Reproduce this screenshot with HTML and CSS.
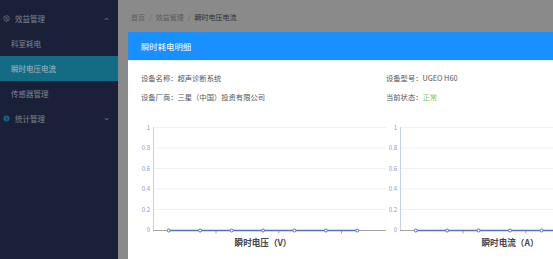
FILE: index.html
```html
<!DOCTYPE html>
<html lang="zh">
<head>
    <meta charset="utf-8">
    <title>瞬时电压电流</title>
    <link rel="stylesheet" href="styles.css">
</head>
<body>
    <div class="layout">
        <aside class="sidebar">
            <div class="menu-group">
                <svg class="menu-icon" viewBox="0 0 8 8"><circle cx="4" cy="4" r="3.2" fill="none" stroke="currentColor" stroke-width="0.8"/><path d="M5 2.6H3.4L3.2 4h1.2a0.9 0.9 0 0 1 0 1.8H3" fill="none" stroke="currentColor" stroke-width="0.7"/></svg>
                <span>效益管理</span>
                <svg class="arrow" viewBox="0 0 6 4"><path d="M1 3L3 1L5 3" fill="none" stroke="currentColor" stroke-width="0.9"/></svg>
            </div>
            <div class="menu-item">科室耗电</div>
            <div class="menu-item active">瞬时电压电流</div>
            <div class="menu-item">传感器管理</div>
            <div class="menu-group">
                <svg class="menu-icon blue" viewBox="0 0 8 8"><circle cx="4" cy="4" r="3.4" fill="currentColor"/><path d="M5 2.6H3.4L3.2 4h1.2a0.9 0.9 0 0 1 0 1.8H3" fill="none" stroke="#1b2039" stroke-width="0.7"/></svg>
                <span>统计管理</span>
                <svg class="arrow" viewBox="0 0 6 4"><path d="M1 1L3 3L5 1" fill="none" stroke="currentColor" stroke-width="0.9"/></svg>
            </div>
        </aside>

        <main class="main">
            <div class="breadcrumb">
                <span>首页</span>
                <span class="sep">/</span>
                <span>效益管理</span>
                <span class="sep">/</span>
                <span class="current">瞬时电压电流</span>
            </div>

            <div class="dialog">
                <div class="dialog-header">瞬时耗电明细</div>
                <div class="dialog-body">
                    <div class="column">
                        <p class="info">设备名称：超声诊断系统</p>
                        <p class="info">设备厂商：三星（中国）投资有限公司</p>
                        <svg class="chart" width="245" height="140" viewBox="0 0 245 140">
                            <g stroke="#edf1f8" stroke-width="1">
                                <line x1="12" y1="15.5" x2="245" y2="15.5"/>
                                <line x1="12" y1="36" x2="245" y2="36"/>
                                <line x1="12" y1="56.5" x2="245" y2="56.5"/>
                                <line x1="12" y1="77" x2="245" y2="77"/>
                                <line x1="12" y1="97.5" x2="245" y2="97.5"/>
                            </g>
                            <line x1="12.5" y1="15" x2="12.5" y2="118" stroke="#c8d0ee" stroke-width="1"/>
                            <g class="ylabels" text-anchor="end">
                                <text x="9" y="17.5">1</text>
                                <text x="9" y="38">0.8</text>
                                <text x="9" y="58.5">0.6</text>
                                <text x="9" y="79">0.4</text>
                                <text x="9" y="99.5">0.2</text>
                                <text x="9" y="120">0</text>
                            </g>
                            <line x1="12" y1="118.5" x2="245" y2="118.5" stroke="#a3a3a3" stroke-width="1"/>
                            <g stroke="#a3a3a3" stroke-width="1">
                                <line x1="75" y1="118" x2="75" y2="121.5"/>
                                <line x1="137.8" y1="118" x2="137.8" y2="121.5"/>
                                <line x1="200.6" y1="118" x2="200.6" y2="121.5"/>
                            </g>
                            <line x1="27.7" y1="118.5" x2="216.3" y2="118.5" stroke="#5470c6" stroke-width="1.3"/>
                            <g fill="#fff" stroke="#5470c6" stroke-width="1">
                                <circle cx="27.7" cy="118.5" r="1.5"/>
                                <circle cx="59.1" cy="118.5" r="1.5"/>
                                <circle cx="90.6" cy="118.5" r="1.5"/>
                                <circle cx="122" cy="118.5" r="1.5"/>
                                <circle cx="153.4" cy="118.5" r="1.5"/>
                                <circle cx="184.9" cy="118.5" r="1.5"/>
                                <circle cx="216.3" cy="118.5" r="1.5"/>
                            </g>
                            <text class="axis-title" x="122" y="133.5" text-anchor="middle">瞬时电压（V）</text>
                        </svg>
                    </div>
                    <div class="column">
                        <p class="info">设备型号：UGEO H60</p>
                        <p class="info">当前状态：<span class="ok">正常</span></p>
                        <svg class="chart shifted" width="245" height="140" viewBox="0 0 245 140">
                            <g stroke="#edf1f8" stroke-width="1">
                                <line x1="12" y1="15.5" x2="245" y2="15.5"/>
                                <line x1="12" y1="36" x2="245" y2="36"/>
                                <line x1="12" y1="56.5" x2="245" y2="56.5"/>
                                <line x1="12" y1="77" x2="245" y2="77"/>
                                <line x1="12" y1="97.5" x2="245" y2="97.5"/>
                            </g>
                            <line x1="12.5" y1="15" x2="12.5" y2="118" stroke="#c8d0ee" stroke-width="1"/>
                            <g class="ylabels" text-anchor="end">
                                <text x="9" y="17.5">1</text>
                                <text x="9" y="38">0.8</text>
                                <text x="9" y="58.5">0.6</text>
                                <text x="9" y="79">0.4</text>
                                <text x="9" y="99.5">0.2</text>
                                <text x="9" y="120">0</text>
                            </g>
                            <line x1="12" y1="118.5" x2="245" y2="118.5" stroke="#a3a3a3" stroke-width="1"/>
                            <g stroke="#a3a3a3" stroke-width="1">
                                <line x1="75" y1="118" x2="75" y2="121.5"/>
                                <line x1="137.8" y1="118" x2="137.8" y2="121.5"/>
                                <line x1="200.6" y1="118" x2="200.6" y2="121.5"/>
                            </g>
                            <line x1="27.7" y1="118.5" x2="216.3" y2="118.5" stroke="#5470c6" stroke-width="1.3"/>
                            <g fill="#fff" stroke="#5470c6" stroke-width="1">
                                <circle cx="27.7" cy="118.5" r="1.5"/>
                                <circle cx="59.1" cy="118.5" r="1.5"/>
                                <circle cx="90.6" cy="118.5" r="1.5"/>
                                <circle cx="122" cy="118.5" r="1.5"/>
                                <circle cx="153.4" cy="118.5" r="1.5"/>
                                <circle cx="184.9" cy="118.5" r="1.5"/>
                                <circle cx="216.3" cy="118.5" r="1.5"/>
                            </g>
                            <text class="axis-title" x="122" y="133.5" text-anchor="middle">瞬时电流（A）</text>
                        </svg>
                    </div>
                </div>
            </div>
        </main>
    </div>
</body>
</html>
```

FILE: styles.css
```css
* {
    margin: 0;
    padding: 0;
    box-sizing: border-box;
}

html,
body {
    width: 100%;
    height: 100%;
    overflow: hidden;
}

body {
    font-family: "Noto Sans CJK SC", "Noto Sans", sans-serif;
    background-color: #8a8a8a;
}

.layout {
    display: flex;
    height: 100%;
}

/* left menu */
.sidebar {
    width: 118px;
    flex: none;
    padding-top: 6px;
    background-color: #1b2039;
}

.menu-group,
.menu-item {
    height: 25px;
    display: flex;
    align-items: center;
    font-size: 7.5px;
    color: #80848f;
}

.menu-group {
    padding: 0 9px 0 3px;
}

.menu-item {
    padding-left: 11px;
}

.menu-item.active {
    background-color: #146c84;
    color: #aab8c2;
}

.menu-icon {
    width: 7px;
    height: 7px;
    margin-right: 5px;
    color: #767a88;
}

.menu-icon.blue {
    color: #1d6591;
}

.arrow {
    width: 5px;
    height: 4px;
    margin-left: auto;
    color: #9a9eaa;
}

/* content */
.main {
    flex: 1;
    min-width: 0;
    overflow: hidden;
    background-color: #8a8a8a;
}

.breadcrumb {
    height: 32px;
    padding: 2px 0 0 13px;
    display: flex;
    align-items: center;
    font-size: 7px;
    color: #5c5c5c;
}

.breadcrumb .sep {
    margin: 0 4px;
    color: #6a6a6a;
}

.breadcrumb .current {
    color: #2f2f2f;
}

.dialog {
    margin-left: 10px;
    height: 227px;
    overflow: hidden;
    background-color: #fff;
}

.dialog-header {
    height: 29px;
    padding-left: 13px;
    display: flex;
    align-items: center;
    font-size: 8.4px;
    color: #fff;
    background-color: #1890ff;
    border-bottom: 1px solid #e9eef6;
}

.dialog-body {
    display: flex;
    padding: 8px 0 0 13px;
}

.column {
    width: 245px;
    flex: none;
}

.info {
    font-size: 7.3px;
    line-height: 19px;
    color: #555;
}

.info .ok {
    color: #80d05c;
}

.chart {
    display: block;
    margin-top: 5px;
}

.chart.shifted {
    margin-left: 2px;
}

.ylabels {
    font-size: 6px;
    fill: #8a98cc;
}

.axis-title {
    font-size: 8.6px;
    font-weight: bold;
    fill: #464646;
}
```
